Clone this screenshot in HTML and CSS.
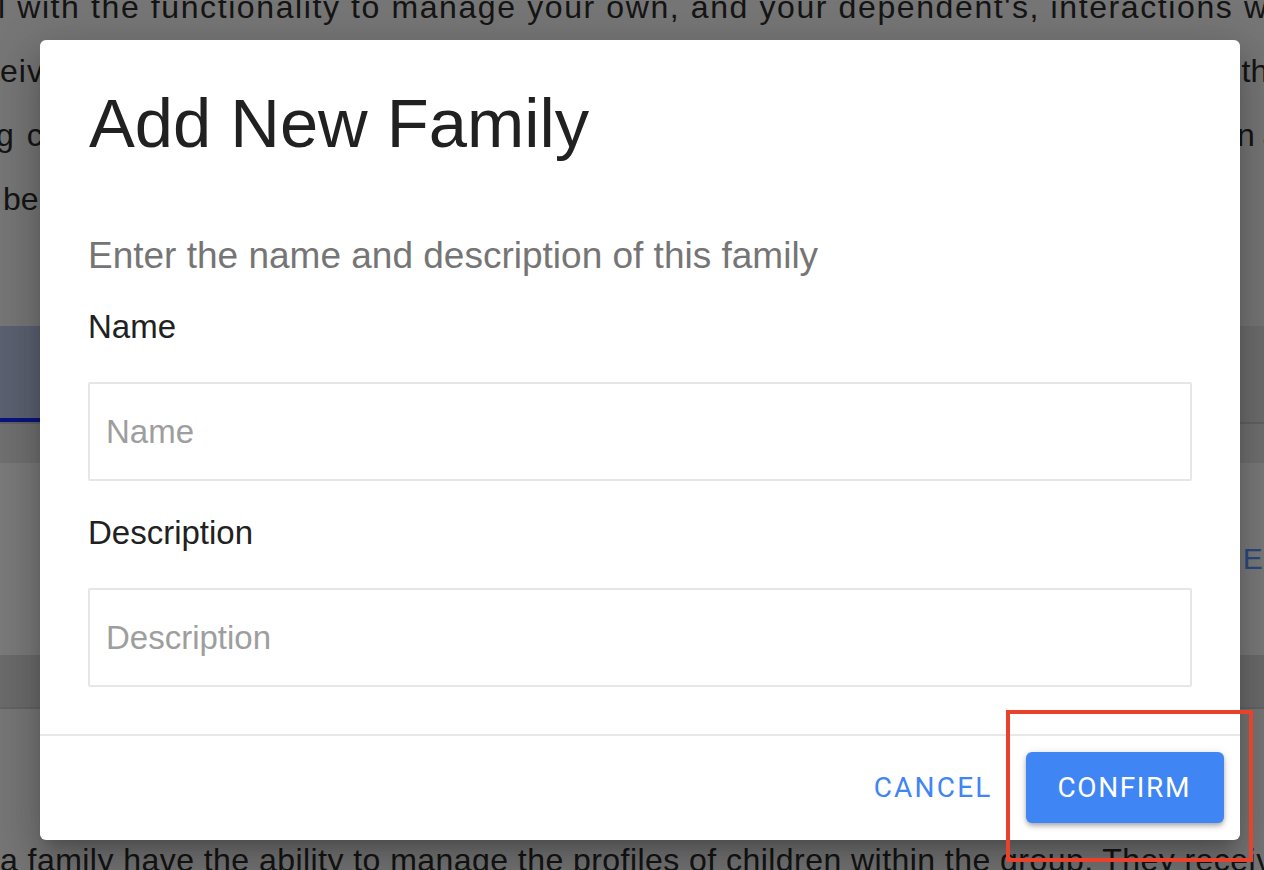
FILE: index.html
```html
<!DOCTYPE html>
<html lang="en">
<head>
<meta charset="utf-8">
<title>Add New Family</title>
<link rel="stylesheet" href="styles.css">
</head>
<body>
<div class="page">
  <div class="intro">
    <div class="line first">l with the functionality to manage your own, and your dependent's, interactions with</div>
    <div class="line split"><span class="head e1">eive notifications about upcoming group activity and can also see</span><span class="tail t1">the</span></div>
    <div class="line split"><span class="head e2">g conversations with other members of the family and take part</span><span class="tail t2">in and</span></div>
    <div class="line lead">be shared with everyone in the group.</div>
  </div>
  <div class="tabs">
    <div class="tab active">Families</div>
    <div class="tab">Members</div>
  </div>
  <div class="band"></div>
  <div class="card">
    <div class="card-main">Family</div>
    <span class="card-action">EDIT</span>
  </div>
  <div class="band band-alt"></div>
  <div class="spacer"></div>
  <div class="line bottom">a family have the ability to manage the profiles of children within the group. They receive</div>
</div>

<div class="backdrop">
  <div class="dialog" role="dialog" aria-labelledby="dlg-title">
    <div class="dialog-body">
      <h2 class="dialog-title" id="dlg-title">Add New Family</h2>
      <p class="dialog-subtitle">Enter the name and description of this family</p>
      <label class="field-label" for="fam-name">Name</label>
      <input class="field-input" id="fam-name" type="text" placeholder="Name">
      <label class="field-label field-gap" for="fam-desc">Description</label>
      <input class="field-input" id="fam-desc" type="text" placeholder="Description">
    </div>
    <div class="dialog-actions">
      <button class="btn btn-text" type="button">CANCEL</button>
      <button class="btn btn-contained" type="button">CONFIRM</button>
    </div>
  </div>
</div>

<div class="highlight"></div>
</body>
</html>
```

FILE: styles.css
```css
* {
  box-sizing: border-box;
}

html, body {
  margin: 0;
  padding: 0;
  width: 1264px;
  height: 870px;
  overflow: hidden;
}

body {
  font-family: "Liberation Sans", Arial, sans-serif;
  background: #ececec;
  position: relative;
}

/* ---------- underlying page ---------- */
.page {
  width: 1264px;
  height: 870px;
  overflow: hidden;
  color: #2a2a2a;
}

.intro {
  margin-top: -25px;
}

.line {
  font-size: 32px;
  line-height: 64px;
  height: 64px;
  white-space: nowrap;
  overflow: visible;
}

.first {
  margin-left: -2px;
  letter-spacing: 1.6px;
}

.split {
  display: flex;
  justify-content: space-between;
}

.head {
  flex: 0 0 auto;
}

.e1 {
  margin-left: 0;
  letter-spacing: 1px;
}

.e2 {
  margin-left: -4px;
  letter-spacing: 2px;
}

.tail {
  flex: 0 0 auto;
}

.t1 {
  margin-right: -22px;
}

.t2 {
  margin-right: -52px;
  word-spacing: -1px;
}

.lead {
  margin-left: 3px;
}

.tabs {
  margin-top: 95px;
  height: 98px;
  display: flex;
  background: #dadada;
  border-bottom: 2px solid #c4c4c4;
}

.tab {
  width: 300px;
  height: 96px;
  display: flex;
  align-items: center;
  justify-content: center;
  font-size: 28px;
  color: #555;
}

.tab.active {
  margin-left: -250px;
  background: #b8c2e2;
  border-bottom: 4px solid #1428ff;
  color: #1428ff;
}

.band {
  height: 39px;
  background: #e0e0e0;
}

.card {
  height: 192px;
  background: #f4f4f4;
  display: flex;
  align-items: center;
  justify-content: space-between;
}

.card-main {
  padding-left: 120px;
  font-size: 30px;
}

.card-action {
  font-size: 30px;
  color: #5594ff;
  letter-spacing: 1px;
  margin-right: -51px;
}

.band-alt {
  height: 54px;
  background: #d6d6d6;
  border-bottom: 2px solid #c8c8c8;
}

.spacer {
  height: 119px;
}

.bottom {
  letter-spacing: 0.45px;
}

/* ---------- modal ---------- */
.backdrop {
  position: absolute;
  inset: 0;
  background: rgba(0, 0, 0, 0.5);
  display: flex;
  align-items: flex-start;
  justify-content: flex-start;
  padding: 40px 0 0 40px;
}

.dialog {
  width: 1200px;
  background: #ffffff;
  border-radius: 6px;
  display: flex;
  flex-direction: column;
  box-shadow:
    0 11px 15px -7px rgba(0, 0, 0, 0.2),
    0 24px 38px 3px rgba(0, 0, 0, 0.14),
    0 9px 46px 8px rgba(0, 0, 0, 0.12);
}

.dialog-body {
  padding: 44px 48px 47px 48px;
  display: flex;
  flex-direction: column;
}

.dialog-title {
  margin: 0 0 70px 1px;
  font-size: 68.7px;
  line-height: 80px;
  font-weight: 400;
  color: #212121;
}

.dialog-subtitle {
  margin: 0 0 29px 0;
  font-size: 37px;
  line-height: 44px;
  color: #757575;
}

.field-label {
  display: block;
  font-size: 33px;
  line-height: 40px;
  color: #212121;
  margin-bottom: 35px;
}

.field-gap {
  margin-top: 32px;
}

.field-input {
  display: block;
  width: 100%;
  height: 99px;
  border: 2px solid #e6e6e6;
  border-radius: 2px;
  padding: 0 16px;
  font-family: "Liberation Sans", Arial, sans-serif;
  font-size: 33px;
  color: #212121;
  background: #fff;
  outline: none;
}

.field-input::placeholder {
  color: #9e9e9e;
  opacity: 1;
}

.dialog-actions {
  border-top: 2px solid #e8e8e8;
  display: flex;
  justify-content: flex-end;
  align-items: center;
  gap: 16px;
  padding: 16px 16px 17px 16px;
}

.btn {
  height: 71px;
  border: 0;
  font-family: Roboto, "Liberation Sans", sans-serif;
  font-size: 28px;
  font-weight: 400;
  letter-spacing: 1.6px;
  border-radius: 6px;
  cursor: pointer;
  display: flex;
  align-items: center;
  justify-content: center;
}

.btn-text {
  background: transparent;
  color: #3f85f4;
  padding: 0 16px;
  margin-right: 1px;
  letter-spacing: 2.2px;
}

.btn-contained {
  background: #3f85f4;
  color: #ffffff;
  padding: 0 33px 0 32px;
  box-shadow:
    0 2px 4px -1px rgba(0, 0, 0, 0.2),
    0 4px 5px 0 rgba(0, 0, 0, 0.14),
    0 1px 10px 0 rgba(0, 0, 0, 0.12);
}

/* ---------- annotation ---------- */
.highlight {
  position: absolute;
  left: 1006px;
  top: 710px;
  width: 247px;
  height: 152px;
  border: 4px solid #e8412c;
  pointer-events: none;
}
```
